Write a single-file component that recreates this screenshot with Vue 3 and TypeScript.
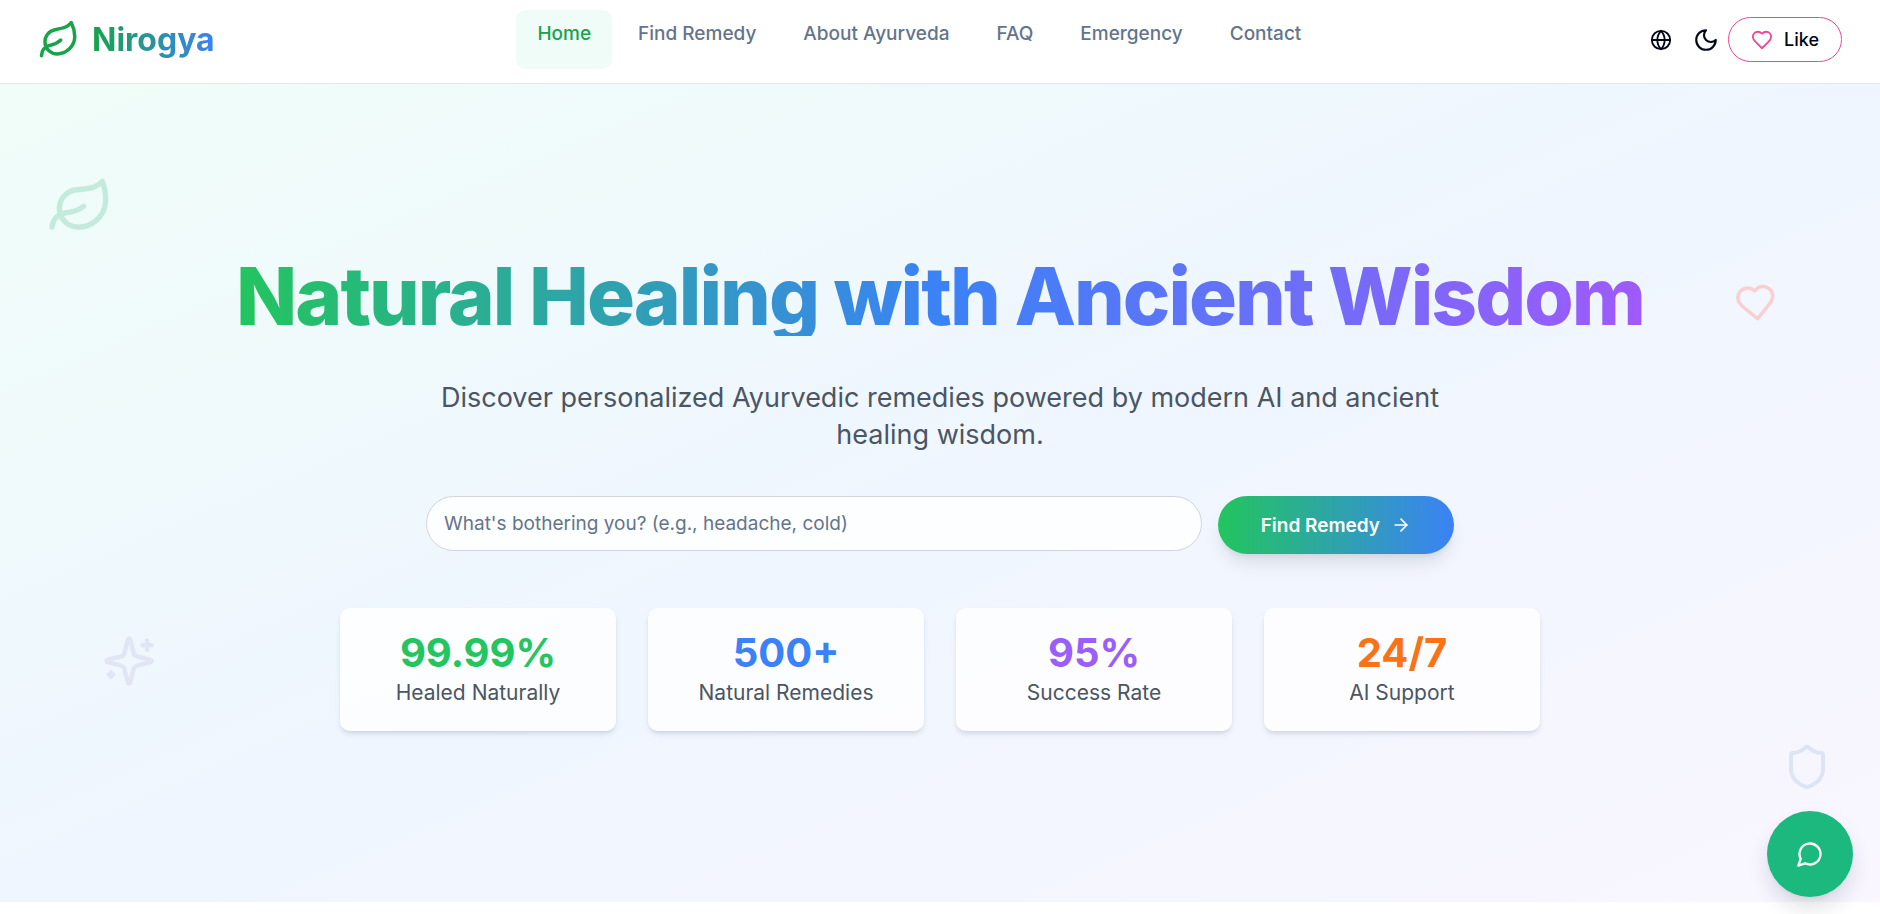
<script setup lang="ts">
import { ref } from 'vue'

interface NavItem {
  label: string
  href: string
  active?: boolean
}

interface Stat {
  value: string
  label: string
  tone: string
}

const navItems: NavItem[] = [
  { label: 'Home', href: '#home', active: true },
  { label: 'Find Remedy', href: '#find' },
  { label: 'About Ayurveda', href: '#about' },
  { label: 'FAQ', href: '#faq' },
  { label: 'Emergency', href: '#emergency' },
  { label: 'Contact', href: '#contact' },
]

const stats: Stat[] = [
  { value: '99.99%', label: 'Healed Naturally', tone: 'green' },
  { value: '500+', label: 'Natural Remedies', tone: 'blue' },
  { value: '95%', label: 'Success Rate', tone: 'purple' },
  { value: '24/7', label: 'AI Support', tone: 'orange' },
]

const query = ref('')
</script>

<template>
  <div class="page">
    <header class="topbar">
      <a class="brand" href="#home">
        <svg class="icon brand-icon" viewBox="0 0 24 24" aria-hidden="true">
          <path d="M11 20A7 7 0 0 1 9.8 6.1C15.5 5 17 4.48 19 2c1 2 2 4.18 2 8 0 5.5-4.78 10-10 10Z" />
          <path d="M2 21c0-3 1.85-5.36 5.08-6C9.5 14.52 12 13 13 12" />
        </svg>
        <span class="brand-name">Nirogya</span>
      </a>

      <nav class="nav" aria-label="Main">
        <a
          v-for="item in navItems"
          :key="item.href"
          :href="item.href"
          class="nav-link"
          :class="{ active: item.active }"
          >{{ item.label }}</a
        >
      </nav>

      <div class="actions">
        <button class="icon-button" type="button" aria-label="Language">
          <svg class="icon globe" viewBox="0 0 24 24" aria-hidden="true">
            <circle cx="12" cy="12" r="10" />
            <path d="M12 2a14.5 14.5 0 0 0 0 20 14.5 14.5 0 0 0 0-20" />
            <path d="M2 12h20" />
          </svg>
        </button>
        <button class="icon-button" type="button" aria-label="Dark mode">
          <svg class="icon moon" viewBox="0 0 24 24" aria-hidden="true">
            <path d="M12 3a6 6 0 0 0 9 9 9 9 0 1 1-9-9Z" />
          </svg>
        </button>
        <button class="like" type="button">
          <svg class="icon like-icon" viewBox="0 0 24 24" aria-hidden="true">
            <path
              d="M19 14c1.49-1.46 3-3.21 3-5.5A5.5 5.5 0 0 0 16.5 3c-1.76 0-3 .5-4.5 2-1.5-1.5-2.74-2-4.5-2A5.5 5.5 0 0 0 2 8.5c0 2.3 1.5 4.05 3 5.5l7 7Z"
            />
          </svg>
          Like
        </button>
      </div>
    </header>

    <main class="hero">
      <svg class="icon deco deco-leaf" viewBox="0 0 24 24" aria-hidden="true">
        <path d="M11 20A7 7 0 0 1 9.8 6.1C15.5 5 17 4.48 19 2c1 2 2 4.18 2 8 0 5.5-4.78 10-10 10Z" />
        <path d="M2 21c0-3 1.85-5.36 5.08-6C9.5 14.52 12 13 13 12" />
      </svg>
      <svg class="icon deco deco-heart" viewBox="0 0 24 24" aria-hidden="true">
        <path
          d="M19 14c1.49-1.46 3-3.21 3-5.5A5.5 5.5 0 0 0 16.5 3c-1.76 0-3 .5-4.5 2-1.5-1.5-2.74-2-4.5-2A5.5 5.5 0 0 0 2 8.5c0 2.3 1.5 4.05 3 5.5l7 7Z"
        />
      </svg>
      <svg class="icon deco deco-sparkles" viewBox="0 0 24 24" aria-hidden="true">
        <path
          d="M9.937 15.5A2 2 0 0 0 8.5 14.063l-6.135-1.582a.5.5 0 0 1 0-.962L8.5 9.936A2 2 0 0 0 9.937 8.5l1.582-6.135a.5.5 0 0 1 .963 0L14.063 8.5A2 2 0 0 0 15.5 9.937l6.135 1.581a.5.5 0 0 1 0 .964L15.5 14.063a2 2 0 0 0-1.437 1.437l-1.582 6.135a.5.5 0 0 1-.963 0z"
        />
        <path d="M20 3v4" />
        <path d="M22 5h-4" />
        <path d="M4 17v2" />
        <path d="M5 18H3" />
      </svg>
      <svg class="icon deco deco-shield" viewBox="0 0 24 24" aria-hidden="true">
        <path
          d="M20 13c0 5-3.5 7.5-7.66 8.95a1 1 0 0 1-.67-.01C7.5 20.5 4 18 4 13V6a1 1 0 0 1 1-1c2 0 4.5-1.2 6.24-2.72a1.17 1.17 0 0 1 1.52 0C14.51 3.81 17 5 19 5a1 1 0 0 1 1 1z"
        />
      </svg>

      <h1 class="title">Natural Healing with Ancient Wisdom</h1>
      <p class="subtitle">
        Discover personalized Ayurvedic remedies powered by modern AI and ancient healing wisdom.
      </p>

      <form class="search" @submit.prevent>
        <input
          v-model="query"
          class="search-input"
          type="text"
          aria-label="Describe your symptoms"
          placeholder="What's bothering you? (e.g., headache, cold)"
        />
        <button class="search-button" type="submit">
          Find Remedy
          <svg class="icon arrow" viewBox="0 0 24 24" aria-hidden="true">
            <path d="M5 12h14" />
            <path d="m12 5 7 7-7 7" />
          </svg>
        </button>
      </form>

      <ul class="stats">
        <li v-for="stat in stats" :key="stat.label" class="stat">
          <span class="stat-value" :class="stat.tone">{{ stat.value }}</span>
          <span class="stat-label">{{ stat.label }}</span>
        </li>
      </ul>
    </main>

    <button class="chat" type="button" aria-label="Open chat">
      <svg class="icon chat-icon" viewBox="0 0 24 24" aria-hidden="true">
        <path d="M7.9 20A9 9 0 1 0 4 16.1L2 22Z" />
      </svg>
    </button>
  </div>
</template>

<style>
body {
  margin: 0;
  background: #ffffff;
}
</style>

<style scoped>
.page {
  min-height: 100vh;
  display: flex;
  flex-direction: column;
  box-sizing: border-box;
  padding-bottom: 12px;
  font-family: Inter, 'Liberation Sans', sans-serif;
  font-size: 18px;
  line-height: 27px;
  color: #020817;
}

button,
input {
  font: inherit;
  color: inherit;
  box-sizing: border-box;
}

button {
  cursor: pointer;
}

.icon {
  display: block;
  flex: none;
  fill: none;
  stroke: currentColor;
  stroke-width: 2;
  stroke-linecap: round;
  stroke-linejoin: round;
}

.topbar {
  display: flex;
  align-items: center;
  justify-content: space-between;
  height: 79px;
  padding: 0 38px 4px;
  background: #ffffff;
  border-bottom: 1px solid #e2e8f0;
}

.brand {
  display: flex;
  align-items: center;
  gap: 12px;
  color: #16a34a;
  text-decoration: none;
}

.brand-icon {
  width: 42px;
  height: 42px;
}

.brand-name {
  font-size: 32px;
  line-height: 40px;
  font-weight: 700;
  background: linear-gradient(to right, #16a34a, #3b82f6);
  background-clip: text;
  -webkit-background-clip: text;
  color: transparent;
}

.nav {
  display: flex;
  gap: 5px;
  margin-right: 14px;
}

.nav-link {
  height: 59px;
  box-sizing: border-box;
  padding: 10px 21px;
  border-radius: 10px;
  font-size: 19px;
  font-weight: 500;
  color: #64748b;
  text-decoration: none;
}

.nav-link.active {
  background: #effcf8;
  color: #16a34a;
}

.actions {
  display: flex;
  align-items: center;
}

.icon-button {
  display: flex;
  align-items: center;
  justify-content: center;
  width: 45px;
  height: 45px;
  padding: 0;
  border: 0;
  background: none;
}

.globe {
  width: 22px;
  height: 22px;
}

.moon {
  width: 26px;
  height: 26px;
}

.like {
  display: flex;
  align-items: center;
  gap: 11px;
  height: 45px;
  padding: 0 22px;
  border: 1px solid #ec4899;
  border-radius: 23px;
  background: #ffffff;
  font-weight: 500;
}

.like-icon {
  width: 22px;
  height: 22px;
  color: #ec4899;
}

.hero {
  position: relative;
  flex: 1;
  display: flex;
  flex-direction: column;
  align-items: center;
  justify-content: center;
  padding: 72px 36px;
  box-sizing: border-box;
  background: linear-gradient(to bottom right, #f0fdf8, #eff6ff, #f9f6ff);
}

.deco {
  position: absolute;
}

.deco-leaf {
  top: 90px;
  left: 49px;
  width: 64px;
  height: 64px;
  color: #c3ebdc;
  transform: rotate(6deg);
}

.deco-heart {
  top: 198px;
  right: 103px;
  width: 42px;
  height: 42px;
  color: #f9cfd0;
  transform: rotate(-6deg);
}

.deco-sparkles {
  bottom: 214px;
  left: 102px;
  width: 54px;
  height: 54px;
  color: #e2e6f4;
}

.deco-shield {
  right: 49px;
  bottom: 111px;
  width: 48px;
  height: 48px;
  color: #dde4f4;
}

.title {
  margin: 0 0 43px;
  font-size: 80px;
  line-height: 81px;
  font-weight: 800;
  letter-spacing: -2px;
  text-align: center;
  background: linear-gradient(to right, #22c55e, #3b82f6, #9f5afa);
  background-clip: text;
  -webkit-background-clip: text;
  color: transparent;
}

.subtitle {
  max-width: 1028px;
  margin: 0 0 43px;
  font-size: 27px;
  line-height: 37px;
  text-align: center;
  color: #4b5563;
}

.search {
  display: flex;
  align-items: flex-start;
  gap: 16px;
  width: 100%;
  max-width: 1028px;
  margin-bottom: 54px;
}

.search-input {
  flex: 1;
  min-width: 0;
  height: 55px;
  padding: 0 17px;
  border: 1px solid #d1d5db;
  border-radius: 28px;
  background: #fdfeff;
  font-size: 19px;
  outline: none;
}

.search-input::placeholder {
  color: #64748b;
  opacity: 1;
}

.search-button {
  display: flex;
  align-items: center;
  justify-content: center;
  gap: 11px;
  height: 58px;
  padding: 0 43px;
  border: 0;
  border-radius: 29px;
  background: linear-gradient(to right, #22c55e, #3b82f6);
  box-shadow: 0 12px 18px -3px rgba(0, 0, 0, 0.1), 0 4px 7px -4px rgba(0, 0, 0, 0.1);
  font-size: 19px;
  font-weight: 600;
  color: #ffffff;
}

.arrow {
  width: 20px;
  height: 20px;
}

.stats {
  display: grid;
  grid-template-columns: repeat(4, 1fr);
  gap: 32px;
  width: 100%;
  max-width: 1200px;
  margin: 0;
  padding: 0;
  list-style: none;
}

.stat {
  display: flex;
  flex-direction: column;
  align-items: center;
  padding: 22px 16px 21px;
  border-radius: 10px;
  background: rgba(255, 255, 255, 0.8);
  box-shadow: 0 4px 6px -1px rgba(0, 0, 0, 0.1), 0 2px 4px -2px rgba(0, 0, 0, 0.1);
}

.stat-value {
  font-size: 40px;
  line-height: 46px;
  font-weight: 700;
}

.stat-label {
  font-size: 21px;
  line-height: 34px;
  color: #4b5563;
}

.green {
  color: #22c55e;
}

.blue {
  color: #3b82f6;
}

.purple {
  color: #995ff8;
}

.orange {
  color: #f97316;
}

.chat {
  position: fixed;
  right: 27px;
  bottom: 17px;
  display: flex;
  align-items: center;
  justify-content: center;
  width: 86px;
  height: 86px;
  padding: 0;
  border: 0;
  border-radius: 50%;
  background: #1cb97f;
  color: #ffffff;
  box-shadow: 0 12px 22px -2px rgba(15, 23, 42, 0.14), 0 4px 7px -4px rgba(0, 0, 0, 0.1);
}

.chat-icon {
  width: 28px;
  height: 28px;
}
</style>
